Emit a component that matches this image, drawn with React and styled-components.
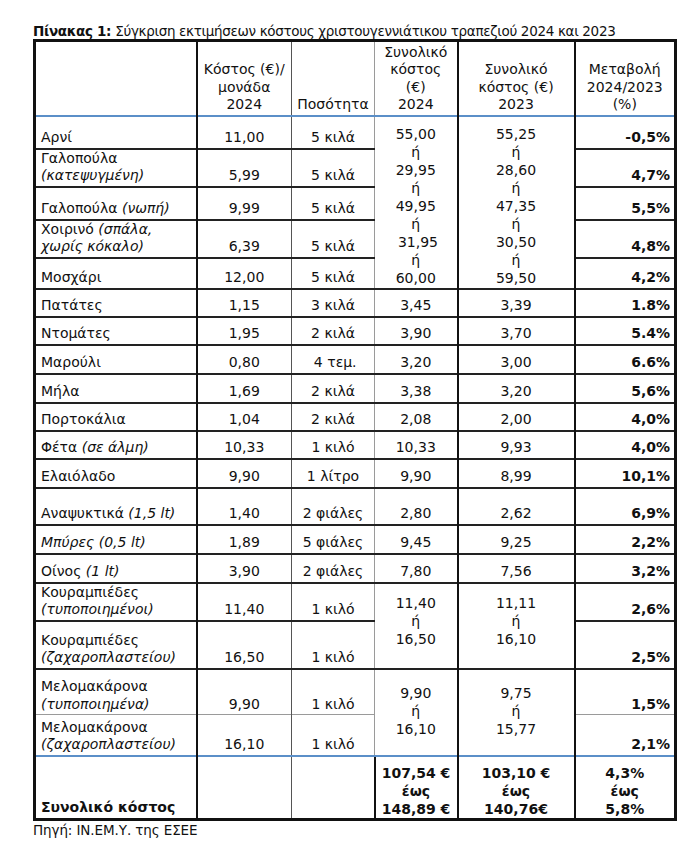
import React from "react";
import styled, { createGlobalStyle } from "styled-components";

const Global = createGlobalStyle`
  html, body { margin: 0; padding: 0; background: #fff; }
  body { font-family: "DejaVu Sans", "Liberation Sans", sans-serif; color: #111; }
`;

const Page = styled.div`
  width: 689px;
  height: 858px;
  padding: 23px 0 0 33px;
  box-sizing: border-box;
`;

const Title = styled.div`
  font-size: 13.5px;
  line-height: 16px;
  height: 16px;
  white-space: nowrap;
  letter-spacing: -0.32px;
  b { font-weight: bold; }
`;

const Table = styled.table`
  border-collapse: collapse;
  table-layout: fixed;
  width: 641px;
  border: 3px solid #111;
  font-size: 14px;
  line-height: 17.5px;
`;

const Row = styled.tr`
  height: ${(p) => p.$h}px;
`;

const Cell = styled.td`
  padding: ${(p) => p.$pt ?? 0}px ${(p) => (p.$align === "right" ? 4 : 5)}px ${(p) => p.$pb ?? 1}px;
  vertical-align: ${(p) => p.$valign || "bottom"};
  text-align: ${(p) => p.$align || "center"};
  font-weight: ${(p) => (p.$bold ? "bold" : "normal")};
  border-top: ${(p) => p.$top || "2px solid #222"};
  border-left: ${(p) => p.$left || "2px solid #111"};
  white-space: nowrap;
  overflow: visible;
  i { font-style: italic; }
`;

const Stack = styled.div`
  line-height: 18px;
`;

const Source = styled.div`
  font-size: 13.5px;
  line-height: 16px;
  padding-top: 1px;
  letter-spacing: -0.1px;
`;

const BLUE = "2px solid #5b8fc8";
const GRAY = "1px solid #9a9a9a";

const rows = [
  { h: 33, name: <>Αρνί</>, unit: "11,00", qty: "5 κιλά", ch: "-0,5%" },
  { h: 38, name: <>Γαλοπούλα<br /><i>(κατεψυγμένη)</i></>, unit: "5,99", qty: "5 κιλά", ch: "4,7%" },
  { h: 33, name: <>Γαλοπούλα <i>(νωπή)</i></>, unit: "9,99", qty: "5 κιλά", ch: "5,5%" },
  { h: 38, name: <>Χοιρινό <i>(σπάλα,</i><br /><i>χωρίς κόκαλο)</i></>, unit: "6,39", qty: "5 κιλά", ch: "4,8%" },
  { h: 31, name: <>Μοσχάρι</>, unit: "12,00", qty: "5 κιλά", ch: "4,2%" },
  { h: 28, name: <>Πατάτες</>, unit: "1,15", qty: "3 κιλά", t24: "3,45", t23: "3,39", ch: "1.8%" },
  { h: 28, name: <>Ντομάτες</>, unit: "1,95", qty: "2 κιλά", t24: "3,90", t23: "3,70", ch: "5.4%" },
  { h: 29, name: <>Μαρούλι</>, unit: "0,80", qty: "\u00a04 τεμ.", t24: "3,20", t23: "3,00", ch: "6.6%" },
  { h: 29, name: <>Μήλα</>, unit: "1,69", qty: "2 κιλά", t24: "3,38", t23: "3,20", ch: "5,6%" },
  { h: 28, name: <>Πορτοκάλια</>, unit: "1,04", qty: "2 κιλά", t24: "2,08", t23: "2,00", ch: "4,0%" },
  { h: 28, name: <>Φέτα <i>(σε άλμη)</i></>, unit: "10,33", qty: "1 κιλό", t24: "10,33", t23: "9,93", ch: "4,0%" },
  { h: 29, name: <>Ελαιόλαδο</>, unit: "9,90", qty: "1 λίτρο", t24: "9,90", t23: "8,99", ch: "10,1%" },
  { h: 37, name: <>Αναψυκτικά <i>(1,5 lt)</i></>, unit: "1,40", qty: "2 φιάλες", t24: "2,80", t23: "2,62", ch: "6,9%" },
  { h: 29, name: <i>Μπύρες (0,5 lt)</i>, unit: "1,89", qty: "5 φιάλες", t24: "9,45", t23: "9,25", ch: "2,2%" },
  { h: 29, name: <>Οίνος <i>(1 lt)</i></>, unit: "3,90", qty: "2 φιάλες", t24: "7,80", t23: "7,56", ch: "3,2%" },
  { h: 37, name: <>Κουραμπιέδες<br /><i>(τυποποιημένοι)</i></>, unit: "11,40", qty: "1 κιλό", ch: "2,6%" },
  { h: 48, name: <>Κουραμπιέδες<br /><i>(ζαχαροπλαστείου)</i></>, unit: "16,50", qty: "1 κιλό", ch: "2,5%" },
  { h: 46, name: <>Μελομακάρονα<br /><i>(τυποποιημένα)</i></>, unit: "9,90", qty: "1 κιλό", ch: "1,5%" },
  { h: 41, name: <>Μελομακάρονα<br /><i>(ζαχαροπλαστείου)</i></>, unit: "16,10", qty: "1 κιλό", ch: "2,1%", gray: true },
];

const merged = {
  0: { span: 5, valign: "bottom", pt: 0, pb: 1, a: ["55,00", "29,95", "49,95", "\u00a031,95", "60,00"], b: ["55,25", "28,60", "47,35", "30,50", "59,50"] },
  15: { span: 2, valign: "top", pt: 10, pb: 0, a: ["11,40", "16,50"], b: ["11,11", "16,10"] },
  17: { span: 2, valign: "top", pt: 14, pb: 0, a: ["9,90", "16,10"], b: ["9,75", "15,77"] },
};

function OrList({ items }) {
  return (
    <Stack>
      {items.map((v, i) => (
        <React.Fragment key={i}>
          {i > 0 && <div>ή</div>}
          <div>{v}</div>
        </React.Fragment>
      ))}
    </Stack>
  );
}

export default function App() {
  return (
    <Page>
      <Global />
      <Title>
        <b>Πίνακας 1:</b> Σύγκριση εκτιμήσεων κόστους χριστουγεννιάτικου τραπεζιού 2024 και 2023
      </Title>
      <Table>
        <colgroup>
          <col style={{ width: 162 }} />
          <col style={{ width: 95 }} />
          <col style={{ width: 83 }} />
          <col style={{ width: 83 }} />
          <col style={{ width: 117 }} />
          <col style={{ width: 101 }} />
        </colgroup>
        <tbody>
          <Row $h={75}>
            <Cell />
            <Cell>Κόστος (€)/<br />μονάδα<br />2024</Cell>
            <Cell $left="1px solid #555">Ποσότητα</Cell>
            <Cell $left={GRAY}>Συνολικό<br />κόστος<br />(€)<br />2024</Cell>
            <Cell>Συνολικό<br />κόστος (€)<br />2023</Cell>
            <Cell>Μεταβολή<br />2024/2023<br />(%)</Cell>
          </Row>
          {rows.map((r, i) => {
            const top = i === 0 ? BLUE : r.gray ? GRAY : undefined;
            const m = merged[i];
            const inMerge = (i > 0 && i < 5) || i === 16 || i === 18;
            return (
              <Row $h={r.h} key={i}>
                <Cell $align="left" $top={top}>{r.name}</Cell>
                <Cell $top={top}>{r.unit}</Cell>
                <Cell $top={top} $left="1px solid #555">{r.qty}</Cell>
                {m && (
                  <>
                    <Cell $top={top} $left={GRAY} rowSpan={m.span} $valign={m.valign} $pt={m.pt} $pb={m.pb}>
                      <OrList items={m.a} />
                    </Cell>
                    <Cell $top={top} rowSpan={m.span} $valign={m.valign} $pt={m.pt} $pb={m.pb}>
                      <OrList items={m.b} />
                    </Cell>
                  </>
                )}
                {!m && !inMerge && (
                  <>
                    <Cell $top={top} $left={GRAY}>{r.t24}</Cell>
                    <Cell $top={top}>{r.t23}</Cell>
                  </>
                )}
                <Cell $top={top} $align="right" $bold>{r.ch}</Cell>
              </Row>
            );
          })}
          <Row $h={64}>
            <Cell $align="left" $top={BLUE} $bold $pb={2}>Συνολικό κόστος</Cell>
            <Cell $top={BLUE} />
            <Cell $top={BLUE} $left="1px solid #555" />
            <Cell $top={BLUE} $bold $pb={0}>
              <Stack>107,54 €<br />έως<br />148,89 €</Stack>
            </Cell>
            <Cell $top={BLUE} $bold $pb={0}>
              <Stack>103,10 €<br />έως<br />140,76€</Stack>
            </Cell>
            <Cell $top={BLUE} $bold $pb={0}>
              <Stack>4,3%<br />έως<br />5,8%</Stack>
            </Cell>
          </Row>
        </tbody>
      </Table>
      <Source>Πηγή: ΙΝ.ΕΜ.Υ. της ΕΣΕΕ</Source>
    </Page>
  );
}
